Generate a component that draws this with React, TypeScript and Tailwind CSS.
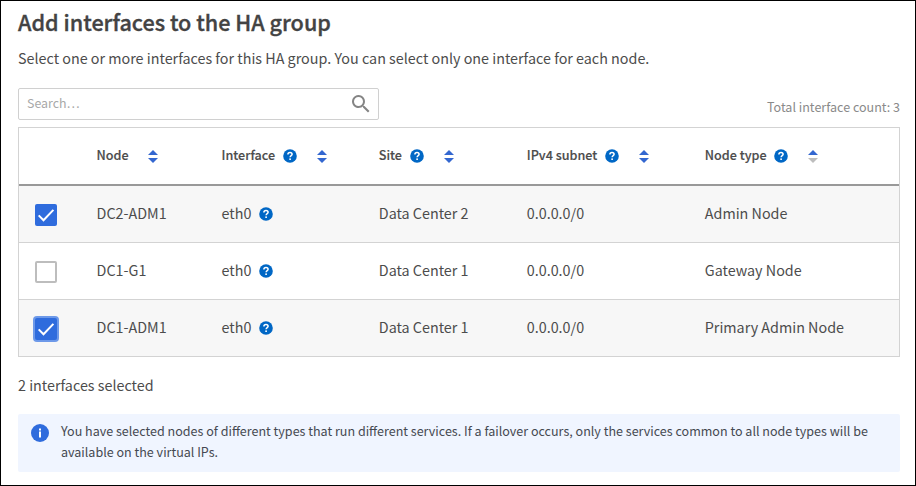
import type { ReactNode } from "react";

function HelpIcon() {
  return (
    <svg viewBox="0 0 14 14" className="block size-3.5 shrink-0">
      <circle cx="7" cy="7" r="6.8" fill="#0067c5" />
      <path d="M4.9 5.4C4.9 4.1 5.8 3.4 7 3.4s2.1.7 2.1 1.8C9.1 6.5 7.1 6.7 7.1 8.3" fill="none" stroke="#fff" strokeWidth="1.5" />
      <rect x="6.3" y="9.4" width="1.6" height="1.6" fill="#fff" />
    </svg>
  );
}

function SortIcon({ ascending = false }: { ascending?: boolean }) {
  return (
    <svg viewBox="0 0 10 13" className="block h-[13px] w-2.5 shrink-0">
      <path d="M5 0 10 5H0Z" fill="#3367d0" />
      <path d="M0 8H10L5 13Z" fill={ascending ? "#bdbdbd" : "#3367d0"} />
    </svg>
  );
}

function Checkbox({ checked, focused = false }: { checked: boolean; focused?: boolean }) {
  if (!checked) return <div className="size-[22px] rounded-[2px] border-2 border-[#bdbdbd] bg-white" />;
  return (
    <div className={`size-[22px] rounded-[2px] bg-[#2f6cdd] ${focused ? "ring-2 ring-[#6d99e9]" : ""}`}>
      <svg viewBox="0 0 22 22" className="block size-full">
        <path d="M3.7 11.4 8.5 16.2 18.4 5.9" fill="none" stroke="#fff" strokeWidth="2" />
      </svg>
    </div>
  );
}

const grid = "grid grid-cols-[77.6px_125px_157.2px_148px_178px_1fr] items-center";

function Heading({ label, help = true, ascending, textWidth }: { label: string; help?: boolean; ascending?: boolean; textWidth: string }) {
  return (
    <div className="flex items-center">
      <span className={`${textWidth} pb-0.5 text-[12.6px] leading-5 font-medium whitespace-nowrap [-webkit-text-stroke:0.15px]`}>{label}</span>
      {help && <HelpIcon />}
      <span className="ml-5">
        <SortIcon ascending={ascending} />
      </span>
    </div>
  );
}

function Cell({ children }: { children: ReactNode }) {
  return <div className="pb-0.5 whitespace-nowrap">{children}</div>;
}

const rows = [
  { node: "DC2-ADM1", site: "Data Center 2", type: "Admin Node", checked: true, focused: false },
  { node: "DC1-G1", site: "Data Center 1", type: "Gateway Node", checked: false, focused: false },
  { node: "DC1-ADM1", site: "Data Center 1", type: "Primary Admin Node", checked: true, focused: true },
];

export default function App() {
  return (
    <main className="h-[486px] w-[916px] overflow-hidden border border-black bg-white pr-[15px] pl-[17px] font-['Noto_Sans_CJK_SC',sans-serif] text-[14.33px] font-normal text-[#4c4c4c]">
      <h1 className="mt-[5px] text-[21.6px] leading-8 font-medium text-[#434343] [-webkit-text-stroke:0.35px]">Add interfaces to the HA group</h1>
      <p className="mt-[8px] leading-6">Select one or more interfaces for this HA group. You can select only one interface for each node.</p>
      <div className="mt-[18px] flex h-8 justify-between">
        <div className="flex w-[361px] items-center justify-between rounded-[2px] border border-[#d0d0d0] pr-[5px] pl-2 text-[12.4px] text-[#a8a8a8]">
          <span className="-mt-0.5">Search…</span>
          <svg viewBox="0 0 24 24" className="size-6" fill="#858585">
            <path d="M15.5 14h-.79l-.28-.27A6.5 6.5 0 1 0 13.73 14.43l.27.28v.79l5 4.99L20.49 19l-4.99-5Zm-6 0A4.5 4.5 0 1 1 14 9.5 4.5 4.5 0 0 1 9.5 14Z" />
          </svg>
        </div>
        <span className="mt-[9px] text-[12.54px] leading-5 text-[#8a8a8a]">Total interface count: 3</span>
      </div>
      <section className="mt-[7px] border border-[#d3d3d3]">
        <header className={`${grid} h-[58px] border-b-2 border-[#999]`}>
          <span />
          <Heading label="Node" help={false} textWidth="w-[31px]" />
          <Heading label="Interface" textWidth="w-[61px]" />
          <Heading label="Site" textWidth="w-[31px]" />
          <Heading label="IPv4 subnet" textWidth="w-[78px]" />
          <Heading label="Node type" textWidth="w-[69px]" ascending />
        </header>
        {rows.map((r) => (
          <div key={r.node} className={`${grid} h-[57px] border-b border-[#d3d3d3] odd:bg-white even:bg-[#f7f7f7] last:h-14 last:border-b-0`}>
            <div className="pt-px pl-4">
              <Checkbox checked={r.checked} focused={r.focused} />
            </div>
            <Cell>{r.node}</Cell>
            <div className="flex items-center">
              <span className="w-[37px] pb-0.5">eth0</span>
              <HelpIcon />
            </div>
            <Cell>{r.site}</Cell>
            <Cell>0.0.0.0/0</Cell>
            <Cell>{r.type}</Cell>
          </div>
        ))}
      </section>
      <p className="mt-[16px] leading-6">2 interfaces selected</p>
      <aside className="mt-[17px] flex h-[58px] rounded-[2px] bg-[#f0f5ff] pt-[6px] pl-[13px] text-[12.54px] text-[#454951]">
        <svg viewBox="0 0 18 18" className="mt-1 size-[18px] shrink-0">
          <circle cx="9" cy="9" r="9" fill="#2f6cdd" />
          <path d="M8 7.5h2v6H8zM8 4.5h2v2H8z" fill="#fff" />
        </svg>
        <p className="ml-3 leading-[21px]">
          You have selected nodes of different types that run different services. If a failover occurs, only the services common to all node types will be
          <br />
          available on the virtual IPs.
        </p>
      </aside>
    </main>
  );
}
